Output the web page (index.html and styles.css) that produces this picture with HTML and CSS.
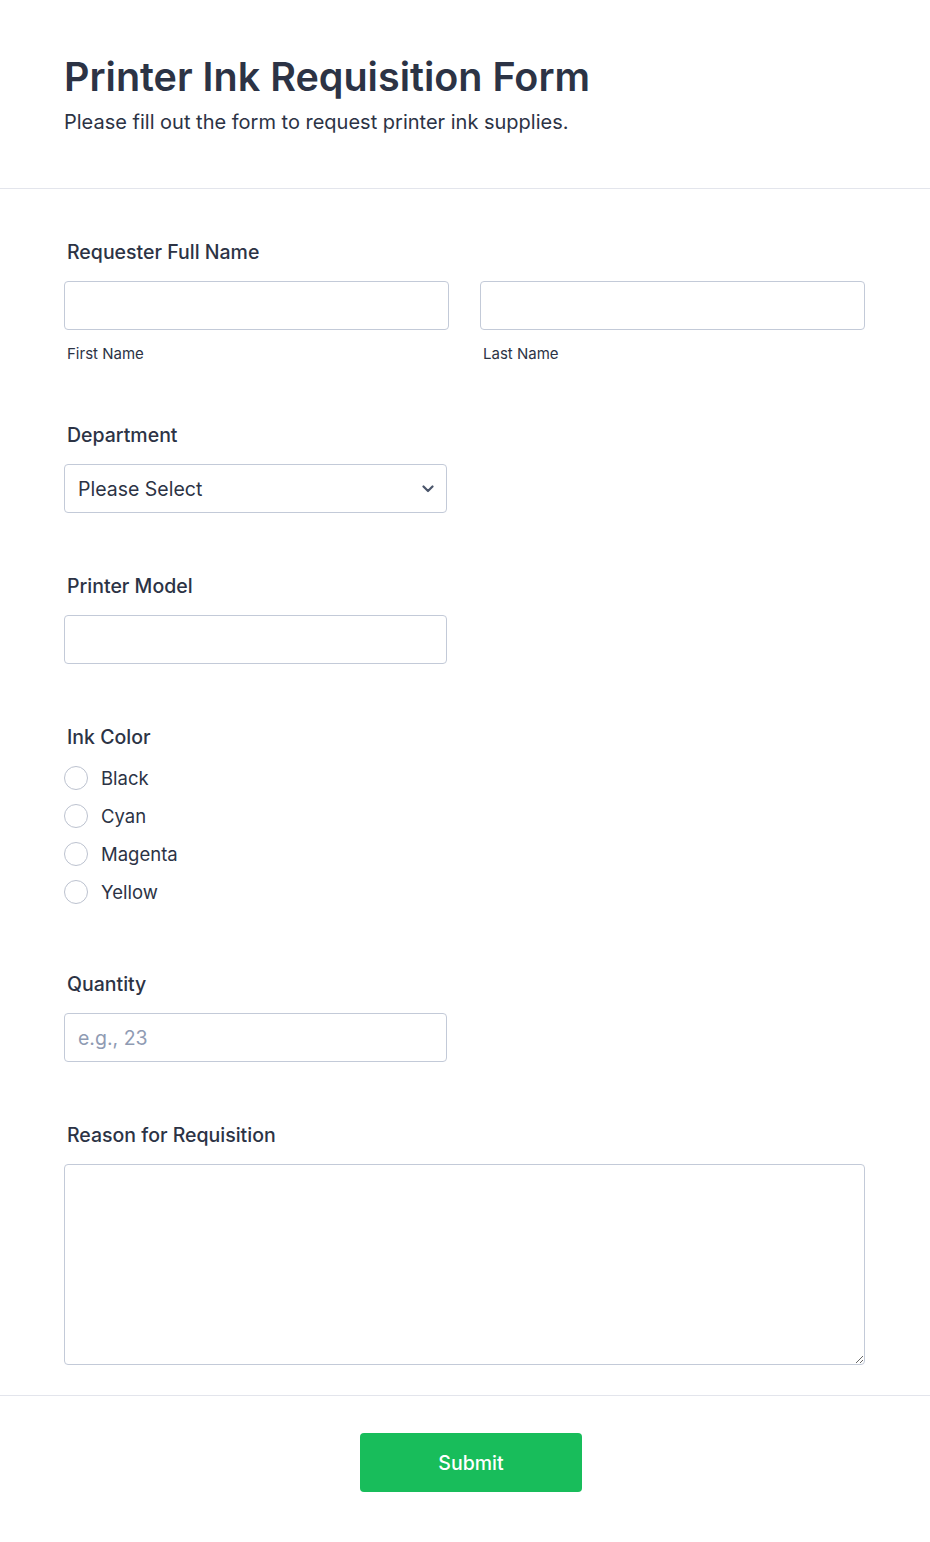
FILE: index.html
```html
<!DOCTYPE html>
<html lang="en">
<head>
  <meta charset="UTF-8">
  <title>Printer Ink Requisition Form</title>
  <link rel="stylesheet" href="styles.css">
</head>
<body>
  <form class="form" onsubmit="return false">
    <header class="form-header">
      <h1>Printer Ink Requisition Form</h1>
      <p>Please fill out the form to request printer ink supplies.</p>
    </header>

    <ul class="fields">
      <li class="field">
        <label class="field-label">Requester Full Name</label>
        <div class="name-row">
          <div class="sub">
            <input type="text" class="input">
            <span class="sublabel">First Name</span>
          </div>
          <div class="sub">
            <input type="text" class="input">
            <span class="sublabel">Last Name</span>
          </div>
        </div>
      </li>

      <li class="field">
        <label class="field-label">Department</label>
        <div class="select-wrap half">
          <select class="input select">
            <option>Please Select</option>
          </select>
          <svg class="chevron" width="12" height="8" viewBox="0 0 12 8"><path d="M1.5 1.5 6 6l4.5-4.5" fill="none" stroke="#4b566b" stroke-width="2.2" stroke-linecap="round" stroke-linejoin="round"/></svg>
        </div>
      </li>

      <li class="field">
        <label class="field-label">Printer Model</label>
        <input type="text" class="input half">
      </li>

      <li class="field">
        <label class="field-label">Ink Color</label>
        <div class="radios">
          <label class="radio"><input type="radio" name="ink"><span class="dot"></span>Black</label>
          <label class="radio"><input type="radio" name="ink"><span class="dot"></span>Cyan</label>
          <label class="radio"><input type="radio" name="ink"><span class="dot"></span>Magenta</label>
          <label class="radio"><input type="radio" name="ink"><span class="dot"></span>Yellow</label>
        </div>
      </li>

      <li class="field">
        <label class="field-label">Quantity</label>
        <input type="number" class="input half" placeholder="e.g., 23">
      </li>

      <li class="field">
        <label class="field-label">Reason for Requisition</label>
        <textarea class="input textarea"></textarea>
      </li>
    </ul>

    <div class="actions">
      <button type="submit" class="submit">Submit</button>
    </div>
  </form>
</body>
</html>
```

FILE: styles.css
```css
* { box-sizing: border-box; }
body {
  margin: 0; background: #fff; color: #2c3345;
  font-family: Inter, "Noto Sans", sans-serif;
}
.form { width: 930px; min-height: 1542px; }

.form-header { padding: 54px 64px 52px; border-bottom: 1px solid #e3e5ec; }
.form-header h1 { margin: 0; font-size: 39.5px; line-height: 46px; font-weight: 600; letter-spacing: 0; }
.form-header p { margin: 8px 0 0; font-size: 20px; line-height: 28px; }

.fields {
  list-style: none; margin: 0; padding: 51px 65px 30px 64px;
  display: flex; flex-direction: column; gap: 61px;
  border-bottom: 1px solid #e3e5ec;
}
.field-label {
  display: block; margin: 0 0 17px 3px;
  font-size: 19.5px; line-height: 24px; font-weight: 500;
}

.input {
  display: block; width: 100%; height: 49px;
  border: 1px solid #c3cad8; border-radius: 4px; background: #fff;
  font-family: inherit; font-size: 19.5px; color: #2c3345;
  padding: 0 13px; outline: none;
}
.input::placeholder { color: #8f9bb3; }
.half { width: 383px; }

.name-row { display: grid; grid-template-columns: 385px 385px; gap: 31px; }
.sublabel { display: block; margin: 15px 0 0 3px; font-size: 15px; line-height: 17px; }

.select-wrap { position: relative; }
.select { appearance: none; -webkit-appearance: none; cursor: pointer; }
.chevron { position: absolute; right: 13px; top: 21px; pointer-events: none; }

.radios { display: flex; flex-direction: column; gap: 14px; padding-bottom: 7px; }
.radio { display: flex; align-items: center; gap: 13px; height: 24px; font-size: 18.5px; cursor: pointer; }
.radio input { display: none; }
.dot { width: 24px; height: 24px; border: 1px solid #bcc2cf; border-radius: 50%; }
.radio input:checked + .dot { border: 7px solid #2e69ff; }

.textarea { height: 201px; resize: vertical; padding: 12px 13px; }

.actions { display: flex; justify-content: center; padding: 37px 0 0 12px; }
.submit {
  width: 222px; height: 59px; border: 0; border-radius: 4px;
  background: #18bd5b; color: #fff;
  font-family: inherit; font-size: 19.5px; font-weight: 500; cursor: pointer;
}
```
